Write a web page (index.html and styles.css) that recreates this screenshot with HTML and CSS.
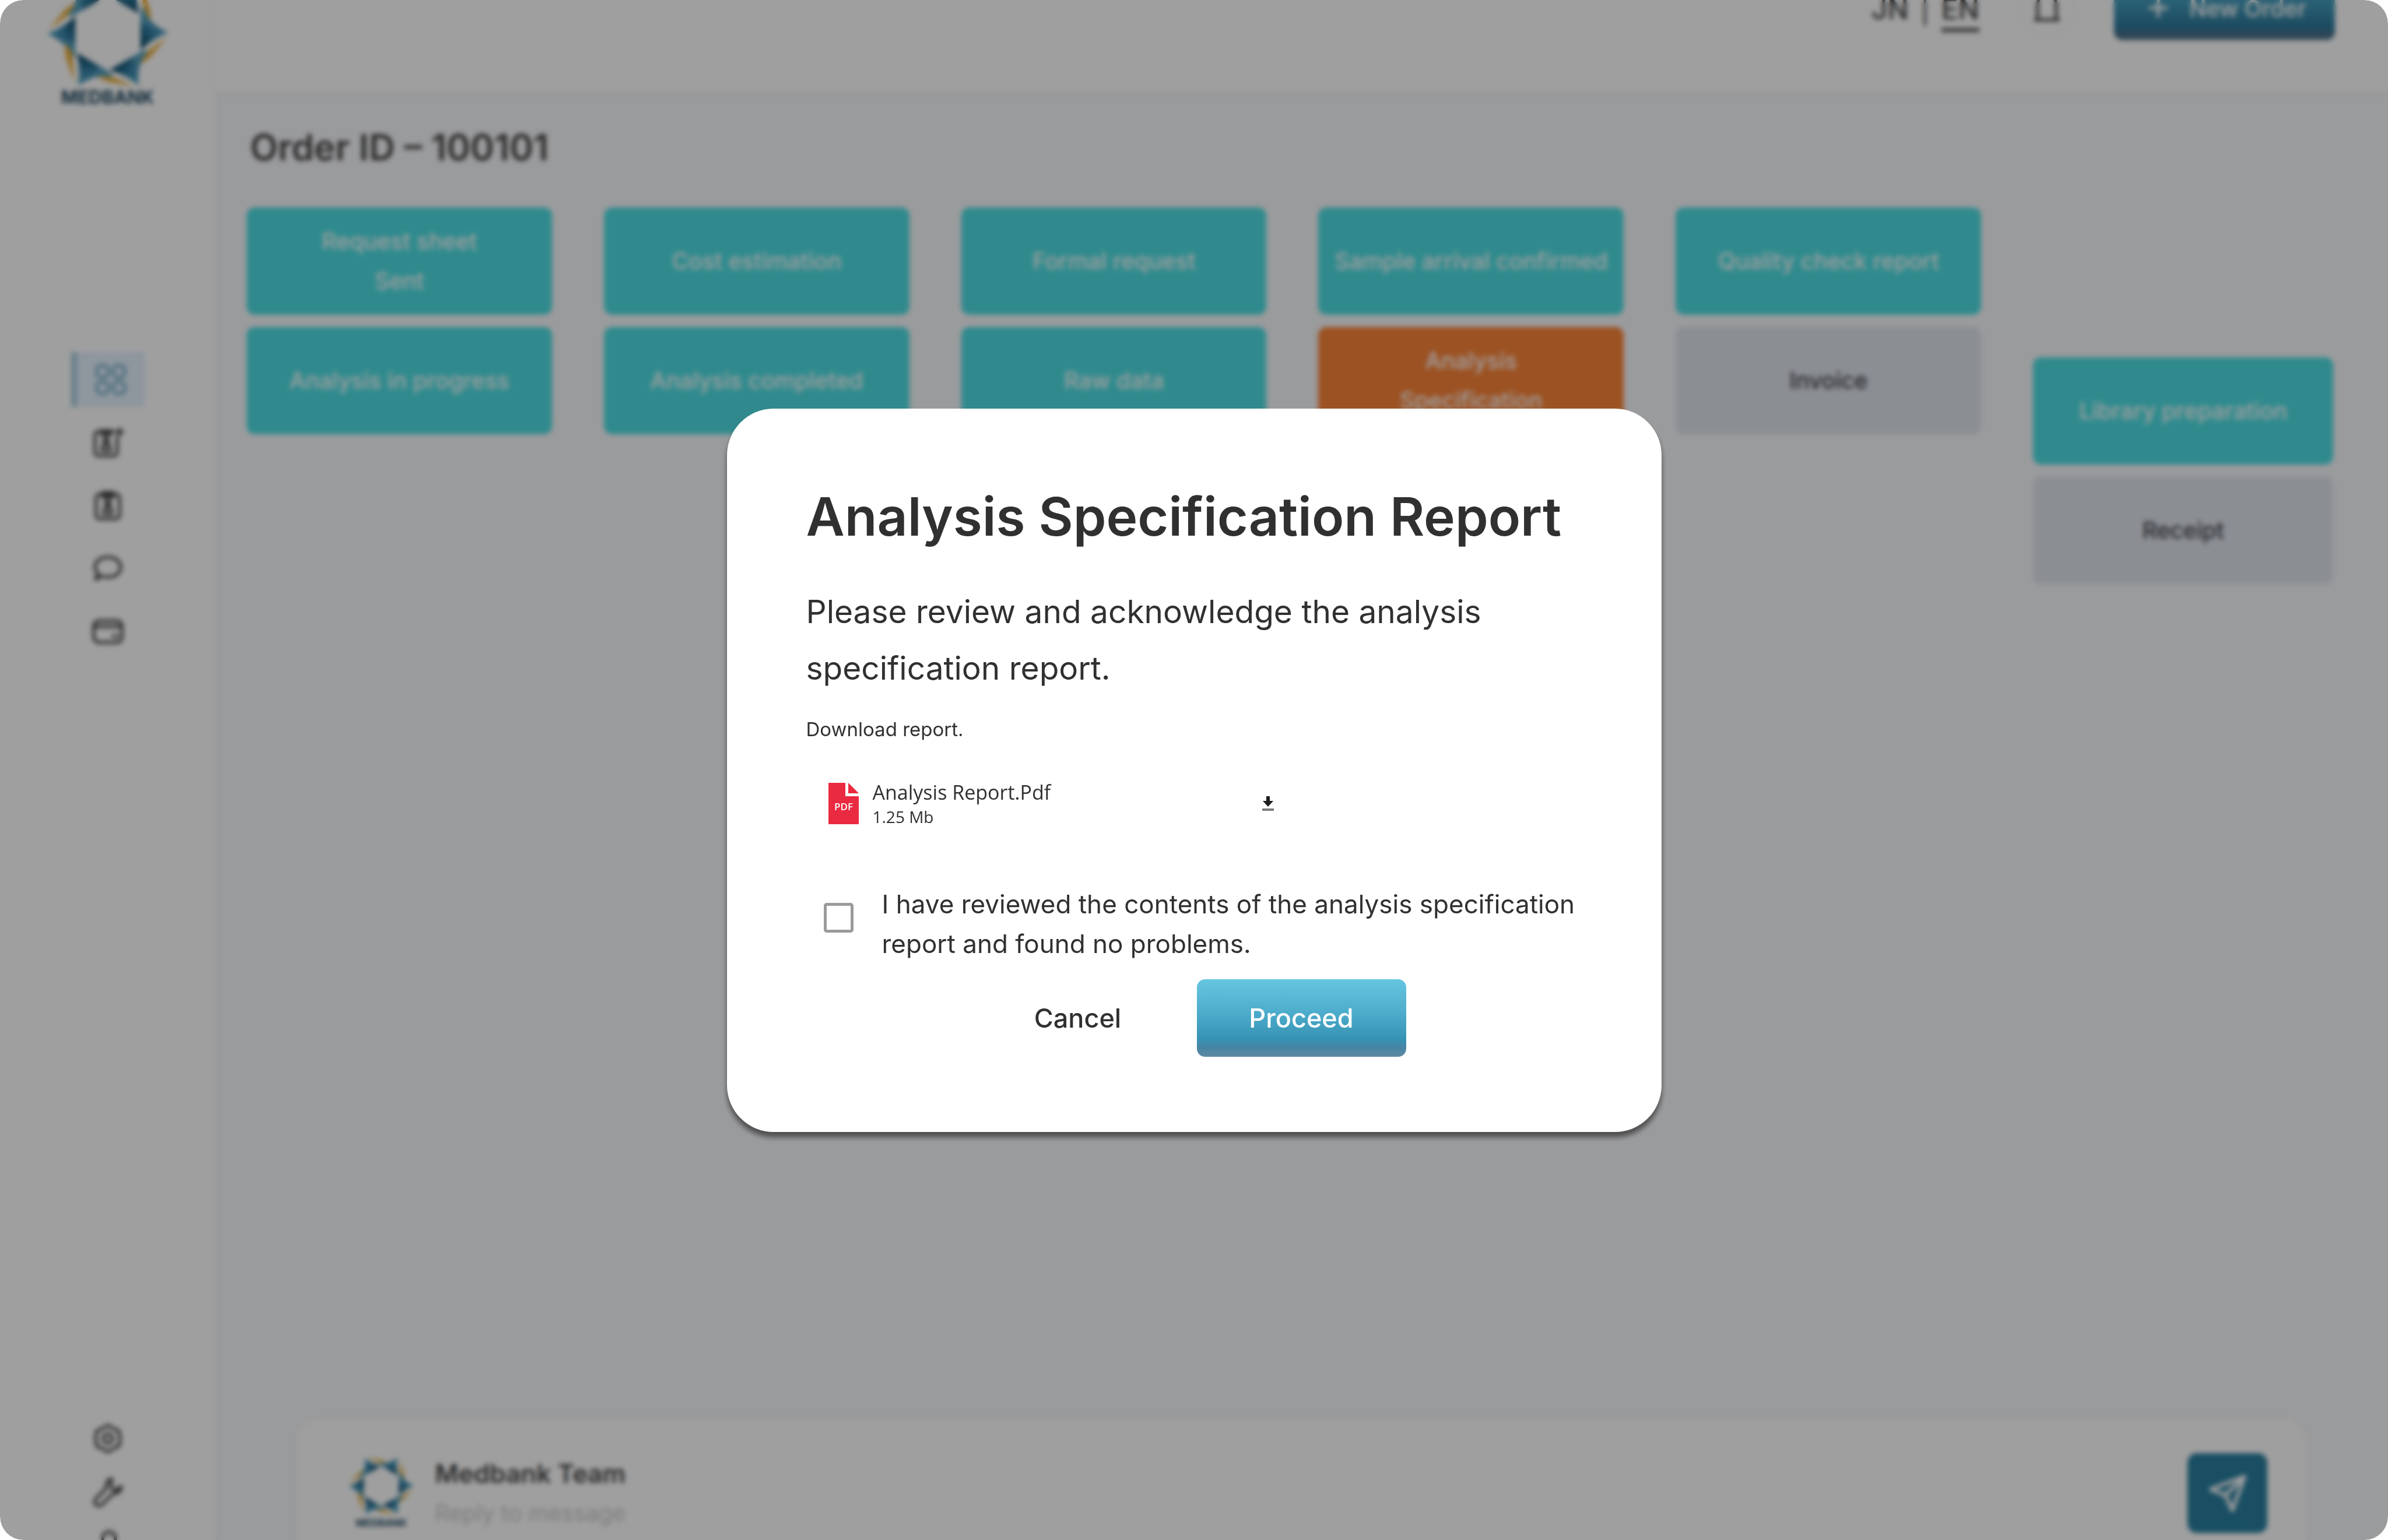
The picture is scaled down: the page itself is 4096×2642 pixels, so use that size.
FILE: index.html
```html
<!DOCTYPE html>
<html lang="en">
<head>
<meta charset="utf-8">
<title>Medbank – Order 100101</title>
<meta name="viewport" content="width=device-width, initial-scale=1">
<link rel="stylesheet" href="styles.css">
</head>
<body>
<svg class="sprite" aria-hidden="true">
  <defs>
    <linearGradient id="blade-blue" x1="0" y1="0.6" x2="1" y2="0.1">
      <stop offset="0" stop-color="#4fa5c6"/>
      <stop offset="0.45" stop-color="#3b87ab"/>
      <stop offset="1" stop-color="#04405f"/>
    </linearGradient>
    <linearGradient id="blade-tail" x1="0" y1="0" x2="0" y2="1">
      <stop offset="0" stop-color="#3b87ab"/>
      <stop offset="1" stop-color="#63aecb"/>
    </linearGradient>
    <g id="blade">
      <path d="M-101 -7 L-72 -42 L-52 -56 L-58 -38 Z" fill="#eeb03a"/>
      <path d="M-104 1 L-56 -8 L-56 38 L-62 46 Q-68 16 -104 1 Z" fill="url(#blade-tail)"/>
      <path d="M-104 1 Q-78 -8 -56 -29 L-56 16 Q-74 10 -104 1 Z" fill="url(#blade-blue)"/>
    </g>
    <symbol id="star" viewBox="-106 -96 212 192">
      <use href="#blade"/>
      <use href="#blade" transform="rotate(60)"/>
      <use href="#blade" transform="rotate(120)"/>
      <use href="#blade" transform="rotate(180)"/>
      <use href="#blade" transform="rotate(240)"/>
      <use href="#blade" transform="rotate(300)"/>
    </symbol>
  </defs>
</svg>

<div class="window">
  <div class="app">
    <aside class="sidebar">
      <a class="brand" href="#">
        <svg class="brand-star" aria-hidden="true"><use href="#star"/></svg>
        <span class="brand-name">MEDBANK</span>
      </a>
      <nav class="nav" aria-label="Main">
        <a class="nav-item nav-item-active" href="#" aria-label="Dashboard">
          <svg class="icon" viewBox="0 0 54 54"><rect x="3" y="3" width="20" height="20" rx="8"/><rect x="31" y="3" width="20" height="20" rx="8"/><rect x="3" y="31" width="20" height="20" rx="8"/><rect x="31" y="31" width="20" height="20" rx="8"/></svg>
        </a>
        <a class="nav-item" href="#" aria-label="New patients">
          <svg class="icon" viewBox="0 0 54 54"><path d="M36 8H11a6 6 0 0 0-6 6v30a6 6 0 0 0 6 6h26a6 6 0 0 0 6-6V18M16 12V7h16v6H16M42 9h11M47 4v10"/><circle cx="24" cy="23" r="4"/><path d="M17 41c0-8 3-11 7-11s7 3 7 11z"/></svg>
        </a>
        <a class="nav-item" href="#" aria-label="Patients">
          <svg class="icon" viewBox="0 0 54 54"><path d="M13 8h28a6 6 0 0 1 6 6v30a6 6 0 0 1-6 6H13a6 6 0 0 1-6-6V14a6 6 0 0 1 6-6zM18 13V5h18v8H18"/><circle cx="27" cy="23" r="4"/><path d="M20 41c0-8 3-11 7-11s7 3 7 11z"/></svg>
        </a>
        <a class="nav-item" href="#" aria-label="Messages">
          <svg class="icon" viewBox="0 0 54 54"><path d="M27 8c13 0 22 7 22 17s-9 17-22 17c-4 0-7 0-10-2L6 46l4-11c-3-3-5-6-5-10C5 15 14 8 27 8z"/></svg>
        </a>
        <a class="nav-item" href="#" aria-label="Payments">
          <svg class="icon" viewBox="0 0 54 54"><rect x="3" y="9" width="48" height="37" rx="9"/><path d="M3 19h48M36 35h7"/></svg>
        </a>
      </nav>
      <nav class="nav-foot" aria-label="Account">
        <a class="foot-item" href="#" aria-label="Settings">
          <svg class="icon" viewBox="0 0 54 54"><path d="M27 4l8 5 11 5 2 13-2 13-11 5-8 5-8-5-11-5-2-13 2-13 11-5z"/><circle cx="27" cy="27" r="8"/></svg>
        </a>
        <a class="foot-item" href="#" aria-label="Tools">
          <svg class="icon" viewBox="0 0 54 54"><path d="M34 4c-8 2-11 8-9 15L6 39c-3 4-2 8 1 10s7 2 10-1l19-19c8 1 14-4 14-12l-8 6-8-2-2-8z"/></svg>
        </a>
        <a class="foot-item" href="#" aria-label="Log out">
          <svg class="icon" viewBox="0 0 54 54"><path d="M18 22v-8a11 11 0 0 1 22 0v8M11 22h36v28H11z"/></svg>
        </a>
      </nav>
    </aside>

    <div class="main">
      <header class="topbar">
        <div class="langs">
          <a class="lang" href="#">JN</a>
          <span class="lang lang-rule">|</span>
          <a class="lang lang-active" href="#">EN</a>
        </div>
        <button class="bell" type="button" aria-label="Notifications">
          <svg class="icon" viewBox="0 0 54 54"><path d="M11 47V22C11 11 17 5 27 5s16 6 16 17v25zM7 47h40"/></svg>
        </button>
        <button class="new-order" type="button">
          <svg class="plus" viewBox="0 0 38 38" aria-hidden="true"><path d="M19 3v32M3 19h32"/></svg>
          New Order
        </button>
      </header>

      <main class="content">
        <h1 class="page-title">Order ID – 100101</h1>
        <div class="steps">
          <div class="step-col">
            <button class="step" type="button">Request sheet<br>Sent</button>
            <button class="step" type="button">Analysis in progress</button>
          </div>
          <div class="step-col">
            <button class="step" type="button">Cost estimation</button>
            <button class="step" type="button">Analysis completed</button>
          </div>
          <div class="step-col">
            <button class="step" type="button">Formal request</button>
            <button class="step" type="button">Raw data</button>
          </div>
          <div class="step-col">
            <button class="step" type="button">Sample arrival confirmed</button>
            <button class="step step-current" type="button">Analysis<br>Specification</button>
          </div>
          <div class="step-col">
            <button class="step" type="button">Quality check report</button>
            <button class="step step-pending" type="button">Invoice</button>
          </div>
          <div class="step-col step-col-late">
            <button class="step" type="button">Library preparation</button>
            <button class="step step-pending" type="button">Receipt</button>
          </div>
        </div>
      </main>

      <form class="composer">
        <div class="avatar">
          <svg class="avatar-star" aria-hidden="true"><use href="#star"/></svg>
          <span class="avatar-name">MEDBANK</span>
        </div>
        <div class="composer-body">
          <label class="composer-title" for="reply">Medbank Team</label>
          <input class="composer-input" id="reply" type="text" placeholder="Reply to message">
        </div>
        <button class="send" type="button" aria-label="Send">
          <svg class="send-icon" viewBox="0 0 68 68"><path d="M63 5L5 27l25 10 12 26zM63 5L30 37"/></svg>
        </button>
      </form>
    </div>
  </div>

  <div class="overlay">
    <section class="dialog" role="dialog" aria-modal="true" aria-labelledby="dialog-title">
      <h2 class="dialog-title" id="dialog-title">Analysis Specification Report</h2>
      <p class="dialog-lead">Please review and acknowledge the analysis specification report.</p>
      <p class="dialog-note">Download report.</p>
      <div class="file">
        <svg class="file-icon" viewBox="0 0 52 71" aria-hidden="true">
          <path d="M0 0h29v23h23v48H0z" fill="#ea2a40"/>
          <path d="M34 0l18 18H34z" fill="#ea2a40"/>
          <text class="file-tag" x="26" y="47" text-anchor="middle">PDF</text>
        </svg>
        <div class="file-text">
          <div class="file-name">Analysis Report.Pdf</div>
          <div class="file-size">1.25 Mb</div>
        </div>
        <a class="download" href="#" aria-label="Download Analysis Report.Pdf">
          <svg class="download-icon" viewBox="0 0 20 26"><path d="M7 0h6v8h6l-9 10L1 8h6z" fill="#1c1c1c"/><path d="M0 21h20v4H0z" fill="#7a7a7a"/></svg>
        </a>
      </div>
      <div class="confirm">
        <input class="confirm-box" id="confirm" type="checkbox">
        <label class="confirm-label" for="confirm">I have reviewed the contents of the analysis specification report and found no problems.</label>
      </div>
      <div class="actions">
        <button class="cancel" type="button">Cancel</button>
        <button class="proceed" type="button">Proceed</button>
      </div>
    </section>
  </div>
</div>
</body>
</html>
```
FILE: styles.css
```css
* {
  box-sizing: border-box;
}

body {
  margin: 0;
  background: #fff;
  color: #454545;
  font-family: Inter, "Liberation Sans", sans-serif;
}

button,
input {
  margin: 0;
  border: 0;
  padding: 0;
  background: none;
  color: inherit;
  font: inherit;
}

a {
  color: inherit;
  text-decoration: none;
}

h1,
h2,
p {
  margin: 0;
}

.sprite {
  position: absolute;
  width: 0;
  height: 0;
}

.window {
  position: relative;
  height: 100vh;
  overflow: hidden;
  border-radius: 40px;
}

/* The page behind the dialog is scrolled part of the way down. */
.app {
  display: grid;
  grid-template-columns: 369px 1fr;
  height: calc(100vh + 217px);
  margin-top: -129px;
  background: #f7f8fb;
}

.icon {
  width: 54px;
  height: 54px;
  fill: none;
  stroke: currentColor;
  stroke-width: 5px;
  stroke-linejoin: round;
  stroke-linecap: round;
}

/* Sidebar */
.sidebar {
  display: flex;
  flex-direction: column;
  align-items: center;
  padding: 90px 0 32px;
  background: #fff;
  box-shadow: 0 0 12px rgba(0, 0, 0, 0.04);
}

.brand {
  display: flex;
  flex-direction: column;
  align-items: center;
}

.brand-star {
  width: 212px;
  height: 192px;
}

.brand-name {
  color: #1f4a63;
  font-size: 31px;
  font-weight: 700;
  line-height: 28px;
}

.nav {
  display: flex;
  flex-direction: column;
  gap: 14px;
  margin-top: 423px;
}

.nav-item {
  display: flex;
  align-items: center;
  justify-content: center;
  width: 126px;
  height: 94px;
}

.nav-item-active {
  border-left: 10px solid #a9cfde;
  background: #e4f1fe;
  color: #76b0c6;
}

.nav-foot {
  display: flex;
  flex-direction: column;
  margin-top: auto;
}

.foot-item {
  display: flex;
  align-items: center;
  height: 92px;
}

/* Top bar */
.main {
  display: flex;
  flex-direction: column;
}

.topbar {
  display: flex;
  align-items: center;
  justify-content: flex-end;
  gap: 67px;
  height: 286px;
  padding-right: 91px;
  background: #fff;
  box-shadow: 0 2px 12px rgba(0, 0, 0, 0.04);
}

.langs {
  display: flex;
  gap: 20px;
}

.lang {
  border: 7px solid transparent;
  border-width: 7px 0;
  padding-top: 4px;
  font-size: 48px;
  font-weight: 500;
  line-height: 64px;
}

.lang-rule {
  font-weight: 400;
}

.lang-active {
  border-bottom-color: #5a5a5a;
}

.bell {
  display: flex;
  align-items: center;
  justify-content: center;
  width: 97px;
  height: 97px;
  border: 3px solid #f6f6f6;
  border-radius: 50%;
}

.new-order {
  display: flex;
  align-items: center;
  gap: 34px;
  width: 379px;
  height: 110px;
  padding-left: 57px;
  border-radius: 14px;
  background: linear-gradient(#5fbfdc 0%, #449bbb 40%, #2b7899 80%, #4d7089 92%, #5a7d96 100%);
  color: #fff;
  font-size: 39px;
  font-weight: 500;
}

.plus {
  width: 38px;
  height: 38px;
  fill: none;
  stroke: currentColor;
  stroke-width: 5px;
}

/* Order progress */
.content {
  padding: 56px 94px 0 54px;
}

.page-title {
  padding: 0 6px;
  font-size: 62px;
  font-weight: 600;
  line-height: 80px;
}

.steps {
  display: grid;
  grid-template-columns: repeat(5, 524fr) 515fr;
  gap: 89px;
  margin-top: 63px;
}

.step-col {
  display: flex;
  flex-direction: column;
  gap: 21px;
}

.step-col-late {
  padding-top: 257px;
}

.step {
  min-height: 184px;
  padding: 24px 0;
  border-radius: 14px;
  background: #4ddee3;
  color: #fff;
  font-size: 39px;
  font-weight: 500;
  line-height: 68px;
}

.step-current {
  background: #fb8438;
}

.step-pending {
  background: #dfe4ec;
  color: #3c3f45;
}

/* Reply box */
.composer {
  display: flex;
  align-items: center;
  height: 257px;
  margin: auto 140px 40px;
  padding: 0 67px 0 88px;
  border-radius: 40px;
  background: #fff;
  box-shadow: 0 0 12px rgba(0, 0, 0, 0.04);
}

.avatar {
  display: flex;
  flex-direction: column;
  align-items: center;
  width: 114px;
}

.avatar-star {
  width: 114px;
  height: 103px;
}

.avatar-name {
  color: #1f4a63;
  font-size: 17px;
  font-weight: 700;
  line-height: 24px;
}

.composer-body {
  display: flex;
  flex: 1;
  flex-direction: column;
  margin-left: 35px;
}

.composer-title {
  font-size: 44px;
  font-weight: 600;
  line-height: 68px;
}

.composer-input {
  height: 68px;
  font-size: 39px;
}

.composer-input::placeholder {
  color: #cacaca;
  opacity: 1;
}

.send {
  display: flex;
  align-items: center;
  justify-content: center;
  width: 137px;
  height: 137px;
  border-radius: 16px;
  background: #2a7f9f;
  color: #fff;
}

.send-icon {
  width: 68px;
  height: 68px;
  fill: none;
  stroke: currentColor;
  stroke-width: 6px;
  stroke-linejoin: round;
}

/* Dialog */
.overlay {
  position: absolute;
  inset: 0;
  display: flex;
  align-items: center;
  justify-content: center;
  background: rgba(0, 0, 0, 0.376);
  backdrop-filter: blur(4px);
}

.dialog {
  width: 1603px;
  padding: 130px 120px 129px 136px;
  border-radius: 80px;
  background: #fff;
  box-shadow: 0 9px 10px rgba(0, 0, 0, 0.5);
  color: #303030;
}

.dialog-title {
  font-size: 91px;
  font-weight: 600;
  line-height: 110px;
}

.dialog-lead {
  margin-top: 60px;
  font-size: 55px;
  line-height: 97px;
}

.dialog-note {
  margin-top: 34px;
  font-size: 33px;
  line-height: 44px;
}

.file {
  display: flex;
  align-items: center;
  width: 814px;
  margin-top: 64px;
  padding-left: 38px;
  font-family: "Open Sans", "Noto Sans", sans-serif;
}

.file-icon {
  width: 52px;
  height: 71px;
}

.file-tag {
  fill: #fff;
  font-size: 17px;
  font-weight: 600;
}

.file-text {
  flex: 1;
  margin-left: 24px;
}

.file-name {
  font-size: 34px;
  line-height: 44px;
}

.file-size {
  font-size: 28px;
  line-height: 40px;
}

.download {
  display: flex;
  align-items: center;
  justify-content: center;
  width: 44px;
  height: 44px;
}

.download-icon {
  width: 20px;
  height: 26px;
}

.confirm {
  display: flex;
  align-items: flex-start;
  gap: 49px;
  margin-top: 96px;
  padding-left: 30px;
}

.confirm-box {
  appearance: none;
  flex: none;
  width: 51px;
  height: 51px;
  margin-top: 32px;
  border: 5px solid #9a9a9a;
  border-radius: 5px;
}

.confirm-label {
  font-size: 44px;
  line-height: 68px;
}

.actions {
  display: flex;
  justify-content: center;
  gap: 40px;
  margin: 27px 0 0 -16px;
}

.cancel,
.proceed {
  height: 133px;
  border-radius: 14px;
  font-size: 45px;
  font-weight: 500;
}

.cancel {
  width: 328px;
}

.proceed {
  width: 359px;
  background: linear-gradient(#66c6e1 0%, #4cabca 45%, #3692b3 78%, #4784a2 88%, #5f8aa3 100%);
  color: #fff;
}
```
